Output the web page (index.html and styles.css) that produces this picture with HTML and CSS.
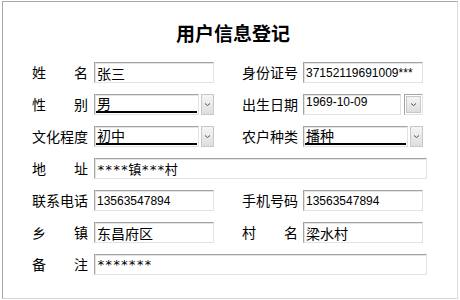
FILE: index.html
```html
<!DOCTYPE html>
<html lang="zh">
<head>
<meta charset="utf-8">
<title>用户信息登记</title>
<link rel="stylesheet" href="styles.css">
</head>
<body>
<div class="frame">
  <h1 class="title">用户信息登记</h1>
  <div class="form">
    <span class="label">姓名</span>
    <div class="field cjk">张三</div>
    <span class="label">身份证号</span>
    <div class="field num">37152119691009***</div>

    <span class="label">性别</span>
    <div class="select">
      <div class="field sel-box"><span class="sel-text cjk">男</span></div>
      <div class="sel-btn"><svg width="7" height="5" viewBox="0 0 7 5"><path d="M1 1.5 L3.5 3.5 L6 1.5" fill="none" stroke="#555" stroke-width="1"/></svg></div>
    </div>
    <span class="label">出生日期</span>
    <div class="select date">
      <div class="field sel-box num">1969-10-09</div>
      <div class="sel-btn wide"><span class="btn-inner"><svg width="7" height="5" viewBox="0 0 7 5"><path d="M1 1.5 L3.5 3.5 L6 1.5" fill="none" stroke="#555" stroke-width="1"/></svg></span></div>
    </div>

    <span class="label">文化程度</span>
    <div class="select">
      <div class="field sel-box"><span class="sel-text cjk">初中</span></div>
      <div class="sel-btn"><svg width="7" height="5" viewBox="0 0 7 5"><path d="M1 1.5 L3.5 3.5 L6 1.5" fill="none" stroke="#555" stroke-width="1"/></svg></div>
    </div>
    <span class="label">农户种类</span>
    <div class="select">
      <div class="field sel-box"><span class="sel-text cjk">播种</span></div>
      <div class="sel-btn"><svg width="7" height="5" viewBox="0 0 7 5"><path d="M1 1.5 L3.5 3.5 L6 1.5" fill="none" stroke="#555" stroke-width="1"/></svg></div>
    </div>

    <span class="label">地址</span>
    <div class="field mono span">****镇***村</div>

    <span class="label">联系电话</span>
    <div class="field num">13563547894</div>
    <span class="label">手机号码</span>
    <div class="field num">13563547894</div>

    <span class="label">乡镇</span>
    <div class="field cjk">东昌府区</div>
    <span class="label">村名</span>
    <div class="field cjk">梁水村</div>

    <span class="label">备注</span>
    <div class="field mono span">*******</div>
  </div>
</div>
</body>
</html>
```
FILE: styles.css
```css
html, body {
  margin: 0;
  padding: 0;
  background: #ffffff;
}
body {
  width: 460px;
  height: 300px;
  font-family: "Noto Sans CJK SC", "Liberation Sans", sans-serif;
  color: #000;
}
.frame {
  box-sizing: border-box;
  margin: 1px 2px 0 2px;
  width: 456px;
  height: 298px;
  border: 1px solid #a9a9a9;
  border-right-color: #dcdcdc;
  border-bottom-color: #d4d4d4;
  padding-top: 18px;
}
.title {
  margin: 0;
  height: 26px;
  font-size: 19px;
  line-height: 26px;
  font-weight: bold;
  text-align: center;
  padding-left: 6px;
}
.form {
  margin-top: 16px;
  padding-left: 29px;
  display: grid;
  grid-template-columns: 62px 148px 61px 120px;
  row-gap: 11px;
  grid-auto-rows: 21px;
}
.label {
  width: 56px;
  font-size: 14px;
  line-height: 21px;
  text-align: justify;
  text-align-last: justify;
  white-space: nowrap;
}
.field {
  box-sizing: border-box;
  width: 120px;
  height: 21px;
  border: 1px solid #a4a4a4;
  border-right-color: #e2e2e2;
  border-bottom-color: #e2e2e2;
  box-shadow: inset 1px 1px 0 #e4e4e4;
  padding: 0 2px 0 2px;
  overflow: hidden;
  white-space: nowrap;
  display: flex;
  align-items: center;
}
.cjk {
  font-size: 14px;
  font-family: "Noto Sans CJK SC", sans-serif;
}
.num {
  font-size: 12px;
  font-family: "Liberation Sans", "Noto Sans CJK SC", sans-serif;
}
.mono {
  font-size: 13px;
  font-family: "DejaVu Sans Mono", "Noto Sans CJK SC", monospace;
}
.field.span {
  grid-column: 2 / 5;
  width: auto;
  margin-right: -4px;
}
.select {
  width: 120px;
  display: flex;
  gap: 2px;
  height: 21px;
}
.sel-box {
  flex: 1;
  width: auto;
  padding: 0 1px;
  align-items: stretch;
}
.sel-text {
  flex: 1;
  display: flex;
  align-items: center;
  line-height: 16px;
  border-bottom: 2px solid #000;
  margin-bottom: 1px;
  padding-left: 1px;
}
.sel-btn {
  box-sizing: border-box;
  width: 13px;
  height: 21px;
  border: 1px solid #c8c8c8;
  background: linear-gradient(#f4f4f4, #dedede);
  display: flex;
  align-items: center;
  justify-content: center;
}
.sel-btn.wide {
  width: 19px;
  background: #fff;
  border: 1px solid #a4a4a4;
  border-right-color: #e2e2e2;
  border-bottom-color: #e2e2e2;
  padding: 1px;
}
.btn-inner {
  flex: 1;
  align-self: stretch;
  border: 1px solid #c8c8c8;
  background: linear-gradient(#f4f4f4, #dedede);
  display: flex;
  align-items: center;
  justify-content: center;
}
.date {
  gap: 3px;
}
.date .sel-box {
  padding: 0 2px;
}
```
